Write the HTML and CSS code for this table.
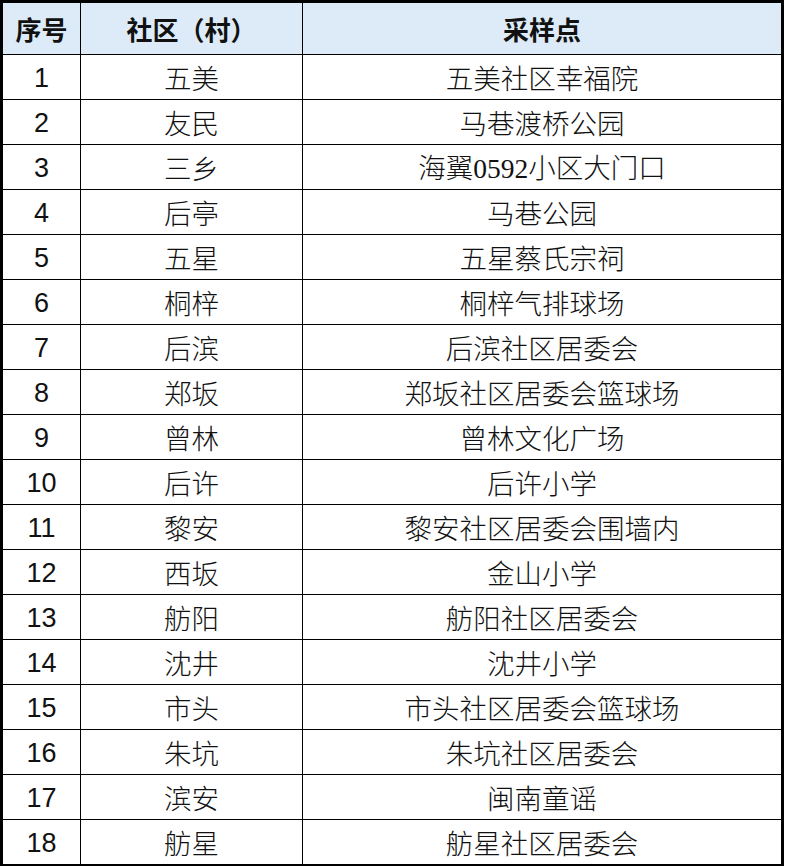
FILE: index.html
```html
<!DOCTYPE html>
<html lang="zh-CN">
<head>
<meta charset="utf-8">
<title>采样点</title>
<link rel="stylesheet" href="styles.css">
</head>
<body>
<table class="sheet">
  <colgroup><col class="c-no"><col class="c-comm"><col class="c-site"></colgroup>
  <thead>
    <tr><th>序号</th><th>社区（村）</th><th>采样点</th></tr>
  </thead>
  <tbody>
    <tr><td class="num">1</td><td>五美</td><td>五美社区幸福院</td></tr>
    <tr><td class="num">2</td><td>友民</td><td>马巷渡桥公园</td></tr>
    <tr><td class="num">3</td><td>三乡</td><td>海翼<span class="lat">0592</span>小区大门口</td></tr>
    <tr><td class="num">4</td><td>后亭</td><td>马巷公园</td></tr>
    <tr><td class="num">5</td><td>五星</td><td>五星蔡氏宗祠</td></tr>
    <tr><td class="num">6</td><td>桐梓</td><td>桐梓气排球场</td></tr>
    <tr><td class="num">7</td><td>后滨</td><td>后滨社区居委会</td></tr>
    <tr><td class="num">8</td><td>郑坂</td><td>郑坂社区居委会篮球场</td></tr>
    <tr><td class="num">9</td><td>曾林</td><td>曾林文化广场</td></tr>
    <tr><td class="num">10</td><td>后许</td><td>后许小学</td></tr>
    <tr><td class="num">11</td><td>黎安</td><td>黎安社区居委会围墙内</td></tr>
    <tr><td class="num">12</td><td>西坂</td><td>金山小学</td></tr>
    <tr><td class="num">13</td><td>舫阳</td><td>舫阳社区居委会</td></tr>
    <tr><td class="num">14</td><td>沈井</td><td>沈井小学</td></tr>
    <tr><td class="num">15</td><td>市头</td><td>市头社区居委会篮球场</td></tr>
    <tr><td class="num">16</td><td>朱坑</td><td>朱坑社区居委会</td></tr>
    <tr><td class="num">17</td><td>滨安</td><td>闽南童谣</td></tr>
    <tr><td class="num">18</td><td>舫星</td><td>舫星社区居委会</td></tr>
  </tbody>
</table>
</body>
</html>
```
FILE: styles.css
```css
html, body {
  margin: 0;
  padding: 0;
  background: #ffffff;
}
.sheet {
  border-collapse: collapse;
  table-layout: fixed;
  width: 784px;
  border: 3px solid #000;
  font-family: "Noto Sans CJK SC", sans-serif;
  color: #111;
}
.c-no { width: 79px; }
.c-comm { width: 222px; }
.c-site { width: auto; }
.sheet th, .sheet td {
  border: 1.5px solid #000;
  padding: 0;
  text-align: center;
  vertical-align: middle;
  line-height: 1;
  white-space: nowrap;
}
.sheet th {
  height: 51px;
  background: #dcebf7;
  font-size: 26px;
  font-weight: 700;
  color: #111;
}
.sheet td {
  height: 42px;
  padding-top: 2px;
  font-size: 27.5px;
  font-weight: 300;
}
.sheet td.num {
  font-family: "Liberation Sans", Arial, sans-serif;
  font-weight: 400;
  font-size: 27px;
}
.lat {
  font-family: "Liberation Serif", "Times New Roman", serif;
  font-weight: 400;
}
```
